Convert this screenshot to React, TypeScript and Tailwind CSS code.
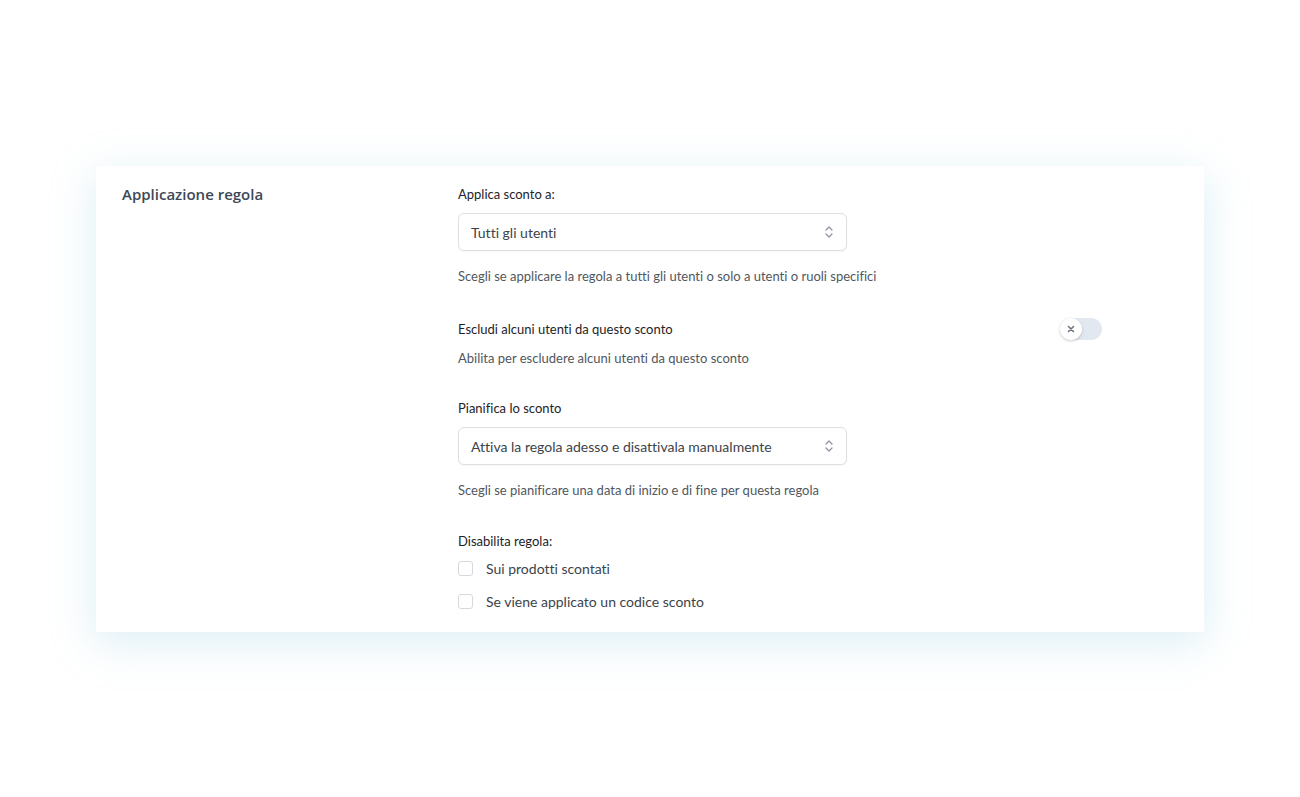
const font = { fontFamily: 'Lato, "Open Sans", sans-serif' };

const UpDown = () => (
  <svg width="10" height="14" viewBox="0 0 10 14" fill="none" stroke="#8c939c" strokeWidth="1.2" strokeLinecap="round" strokeLinejoin="round">
    <path d="M2 5 L5 2 L8 5" />
    <path d="M2 9 L5 12 L8 9" />
  </svg>
);

const Select = ({ value }: { value: string }) => (
  <div className="flex h-[38px] w-[389px] items-center justify-between rounded-md border border-[#dcdfe4] bg-white pl-3 pr-3 text-[14px] text-[#3c434a] shadow-[0_1px_2px_rgba(0,0,0,0.04)]">
    <span>{value}</span>
    <UpDown />
  </div>
);

const Checkbox = ({ label }: { label: string }) => (
  <label className="flex items-center gap-[13px] text-[14px] text-[#3c434a]">
    <span className="h-[15px] w-[15px] rounded-[3px] border border-[#d5d8dd] bg-white" />
    <span>{label}</span>
  </label>
);

export default function App() {
  return (
    <div className="min-h-[797px] w-full bg-white pt-[166px]">
      <div className="mx-auto flex w-[1108px] bg-white pb-[20px] pt-[18px] shadow-[0_10px_40px_rgba(160,210,230,0.38)]">
        <div className="w-[362px] pl-[26px]">
          <h2 className="text-[15px] font-semibold leading-5 text-[#3c4858]" style={{ fontFamily: '"Open Sans", sans-serif' }}>
            Applicazione regola
          </h2>
        </div>
        <div className="flex w-[644px] flex-col text-[13px] text-[#1d2327] [font-variant-ligatures:none]" style={font}>
          <div className="leading-5">Applica sconto a:</div>
          <div className="mt-[9px]">
            <Select value="Tutti gli utenti" />
          </div>
          <div className="mt-[15px] leading-5 text-[#50575e]">
            Scegli se applicare la regola a tutti gli utenti o solo a utenti o ruoli specifici
          </div>

          <div className="mt-[32px] flex items-center justify-between">
            <div className="leading-5">Escludi alcuni utenti da questo sconto</div>
            <div className="relative h-[22px] w-[42px] rounded-full bg-[#e2e8f0]">
              <span className="absolute left-0 top-0 flex h-[22px] w-[22px] items-center justify-center rounded-full bg-white shadow-[0_1px_3px_rgba(0,0,0,0.2)]">
                <svg width="8" height="8" viewBox="0 0 8 8" stroke="#6b7280" strokeWidth="1.6" strokeLinecap="round">
                  <path d="M1.5 1.5 L6.5 6.5 M6.5 1.5 L1.5 6.5" />
                </svg>
              </span>
            </div>
          </div>
          <div className="mt-[8px] leading-5 text-[#50575e]">Abilita per escludere alcuni utenti da questo sconto</div>

          <div className="mt-[30px] leading-5">Pianifica lo sconto</div>
          <div className="mt-[9px]">
            <Select value="Attiva la regola adesso e disattivala manualmente" />
          </div>
          <div className="mt-[15px] leading-5 text-[#50575e]">
            Scegli se pianificare una data di inizio e di fine per questa regola
          </div>

          <div className="mt-[31px] leading-5">Disabilita regola:</div>
          <div className="mt-[7px] flex flex-col gap-[12px]">
            <Checkbox label="Sui prodotti scontati" />
            <Checkbox label="Se viene applicato un codice sconto" />
          </div>
        </div>
      </div>
    </div>
  );
}
